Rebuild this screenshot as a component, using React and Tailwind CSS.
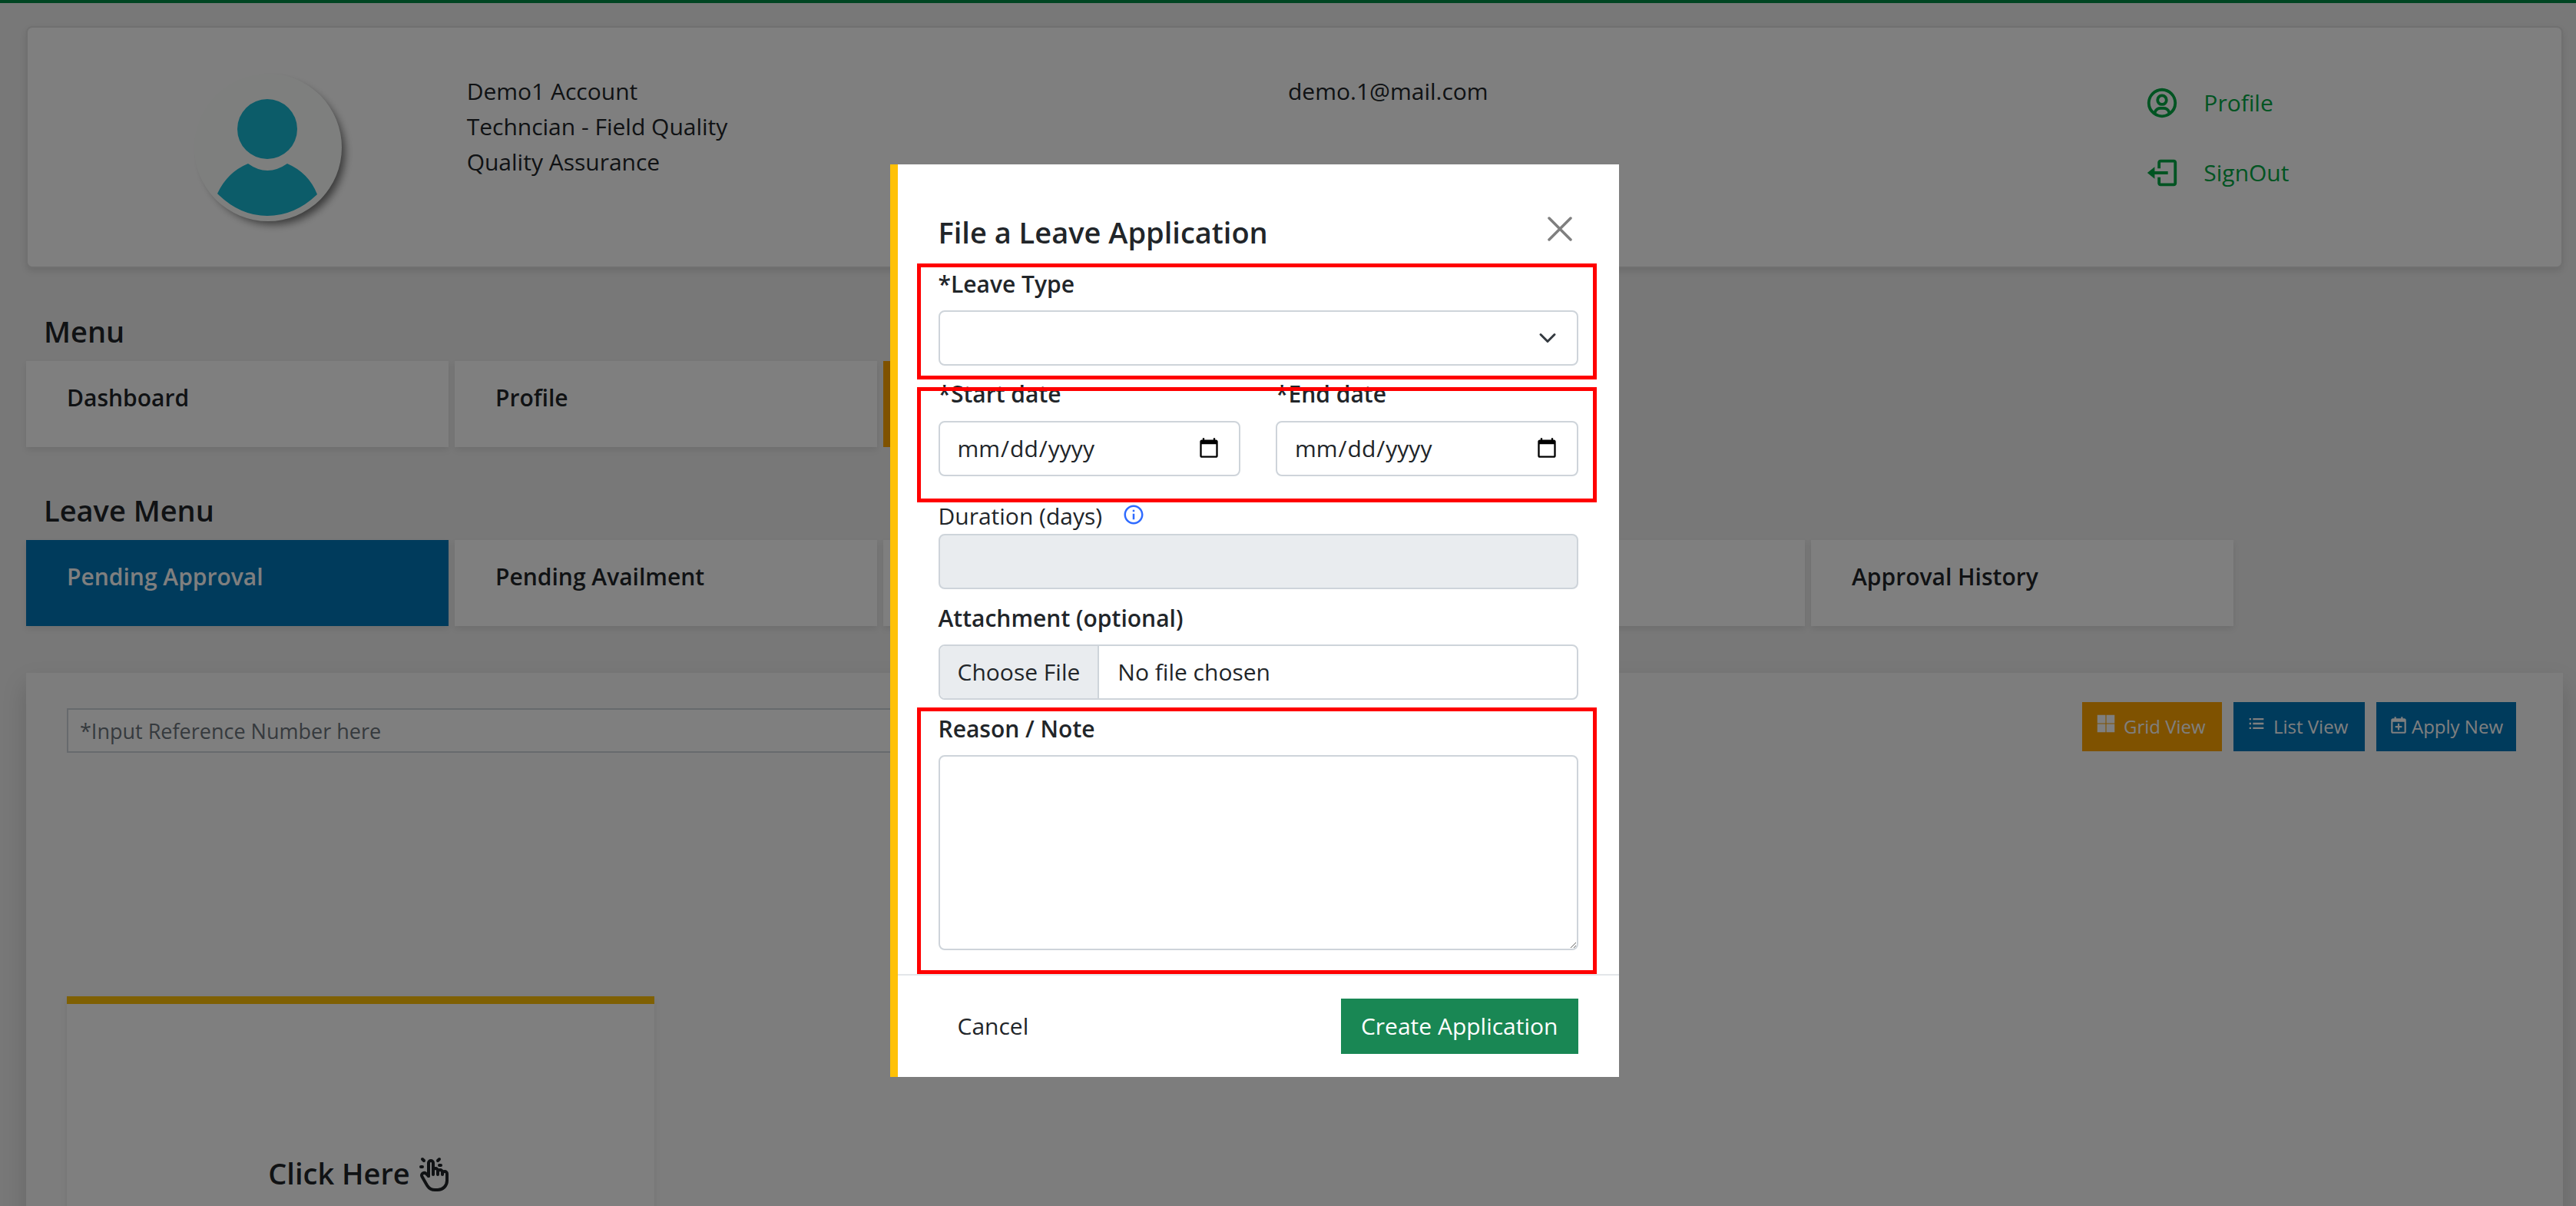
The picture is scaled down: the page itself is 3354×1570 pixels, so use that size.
import { BiCalendarPlus, BiInfoCircle, BiListUl, BiLogOut, BiLogoMicrosoft, BiUserCircle } from "react-icons/bi";
import { TbHandClick } from "react-icons/tb";

function Avatar() {
  return (
    <div className="size-48 overflow-hidden rounded-full bg-[#fdfffd] shadow-[7px_7px_11px_-3px_rgba(0,0,0,0.55)]">
      <svg viewBox="0 0 192 192" className="size-full" fill="#18b8d2" aria-hidden="true">
        <circle cx="95" cy="72" r="39" />
        <path d="M70 117Q95 135 121 117Q149 129 160 157Q131 185 95 185Q59 185 30 156Q43 128 70 117Z" />
      </svg>
    </div>
  );
}

function MenuCard({ label, tone = "bg-white text-[#212529]" }) {
  return (
    <button
      type="button"
      className={`flex h-28 w-[550px] items-start px-[53px] py-[25px] text-left leading-[46px] font-semibold shadow-[0_4px_8px_rgba(0,0,0,0.08)] ${tone}`}
    >
      {label}
    </button>
  );
}

function ToolButton({ icon, label, tone }) {
  return (
    <button type="button" className={`flex h-16 items-center text-2xl text-white ${tone}`}>
      {icon}
      {label}
    </button>
  );
}

function Highlight({ className }) {
  return <div className={`pointer-events-none absolute -right-6 -left-7 border-5 border-[#ff0000] ${className}`} />;
}

const field = "block w-full rounded-lg border-2 border-[#ced4da] px-[22px]";

function LeaveDialog() {
  return (
    <div role="dialog" aria-modal="true" aria-labelledby="dialog-title" className="w-[949px] self-start border-l-10 border-[#ffc107] bg-white">
      <form onSubmit={(e) => e.preventDefault()}>
        <div className="px-[53px] pt-[60px] pb-[31px]">
          <header className="mb-4 flex items-start justify-between">
            <h2 id="dialog-title" className="text-[38px] leading-[57px] font-semibold">File a Leave Application</h2>
            <button type="button" aria-label="Close" className="mt-2 mr-2 text-[#7f7f7f]">
              <svg viewBox="0 0 32 32" className="size-8" fill="none" stroke="currentColor" strokeWidth="3.500" strokeLinecap="round" aria-hidden="true">
                <path d="M2 2 30 30M30 2 2 30" />
              </svg>
            </button>
          </header>

          <div className="relative mb-3.5">
            <label htmlFor="leave-type" className="mb-[11px] block font-semibold">*Leave Type</label>
            <div className="relative">
              <select id="leave-type" defaultValue="" className={`${field} h-18 appearance-none bg-white`}>
                <option value=""></option>
              </select>
              <svg viewBox="0 0 16 16" className="pointer-events-none absolute top-6 right-7 size-6" fill="none" stroke="#343a40" strokeWidth="2" strokeLinecap="round" strokeLinejoin="round" aria-hidden="true">
                <path d="m2 5 6 6 6-6" />
              </svg>
            </div>
            <Highlight className="-top-1 -bottom-[18px]" />
          </div>

          <div className="relative mb-[29px] grid grid-cols-2 gap-[46px]">
            <div>
              <label htmlFor="start-date" className="mb-3 block font-semibold">*Start date</label>
              <input id="start-date" type="date" className={`${field} h-18 bg-white`} />
            </div>
            <div>
              <label htmlFor="end-date" className="mb-3 block font-semibold">*End date</label>
              <input id="end-date" type="date" className={`${field} h-18 bg-white`} />
            </div>
            <Highlight className="top-3.5 -bottom-[34px]" />
          </div>

          <div className="mb-[15px]">
            <div className="flex items-center gap-[26px]">
              <label htmlFor="duration">Duration (days)</label>
              <BiInfoCircle className="-mt-1 size-[30px] text-[#2f6bff]" />
            </div>
            <input id="duration" type="text" readOnly className={`${field} h-18 bg-[#e9ecef]`} />
          </div>

          <div className="mb-[15px]">
            <label htmlFor="attachment" className="mb-[11px] block font-semibold">Attachment (optional)</label>
            <input
              id="attachment"
              type="file"
              className="block h-18 w-full rounded-lg border-2 border-[#ced4da] bg-white file:mr-6 file:h-[68px] file:border-0 file:border-r-2 file:border-solid file:border-[#ced4da] file:bg-[#e9ecef] file:px-[23px] file:font-normal"
            />
          </div>

          <div className="relative">
            <label htmlFor="reason" className="mb-[11px] block font-semibold">Reason / Note</label>
            <textarea id="reason" className={`${field} h-[254px] bg-white`} />
            <Highlight className="-top-[5px] -bottom-[31px]" />
          </div>
        </div>

        <footer className="flex items-center justify-between border-t-2 border-[#e3e6e9] px-[53px] py-[30px]">
          <button type="button" className="h-18 px-[25px]">Cancel</button>
          <button type="submit" className="h-18 bg-[#198754] px-[26px] text-white">Create Application</button>
        </footer>
      </form>
    </div>
  );
}

export default function App() {
  return (
    <div className="h-screen overflow-hidden bg-[#f0f0f0] font-['Open_Sans',sans-serif] text-[30px] leading-[46px] text-[#212529]">
      <div className="flex h-full flex-col border-t-4 border-[#008a45] px-[34px] pt-[30px] pr-[17px]">
        <section className="grid h-[315px] shrink-0 grid-cols-[572fr_1070fr_1116fr_543fr] rounded-lg border-2 border-[#e0e0e0] bg-white pt-[60px] shadow-[0_4px_8px_rgba(0,0,0,0.1)]">
          <div className="flex justify-center pl-[54px]">
            <Avatar />
          </div>
          <div>
            <p>Demo1 Account</p>
            <p>Techncian - Field Quality</p>
            <p>Quality Assurance</p>
          </div>
          <p>demo.1@mail.com</p>
          <nav className="flex flex-col gap-[45px] pt-[15px] text-[#00a844]">
            <a href="#profile" className="flex items-center gap-[31px]">
              <BiUserCircle className="size-[46px]" />
              Profile
            </a>
            <a href="#signout" className="flex items-center gap-[31px]">
              <BiLogOut className="size-[46px]" />
              SignOut
            </a>
          </nav>
        </section>

        <h2 className="mt-[59px] ml-[23px] text-[38px] font-semibold">Menu</h2>
        <nav className="mt-4 flex gap-2">
          <MenuCard label="Dashboard" />
          <MenuCard label="Profile" />
          <div className="h-28 w-[550px] bg-[#ffa500]" />
        </nav>

        <h2 className="mt-[59px] ml-[23px] text-[38px] font-semibold">Leave Menu</h2>
        <nav className="mt-4 flex gap-2">
          <MenuCard label="Pending Approval" tone="bg-[#0076b8] text-white" />
          <MenuCard label="Pending Availment" />
          <div className="h-28 w-[596px] bg-white shadow-[0_4px_8px_rgba(0,0,0,0.08)]" />
          <div className="h-28 w-[596px] bg-white shadow-[0_4px_8px_rgba(0,0,0,0.08)]" />
          <MenuCard label="Approval History" />
        </nav>

        <main className="mt-[61px] grow bg-[#fafafa] pt-[38px] pr-[61px] pl-[53px] shadow-[0_15px_30px_rgba(0,0,0,0.15)]">
          <div className="flex items-start justify-between">
            <input
              type="text"
              aria-label="Reference number"
              placeholder="*Input Reference Number here"
              className="mt-2 h-[58px] w-1/2 border-2 border-[#ced4da] bg-white px-[15px] text-[27px] placeholder:text-[#6c757d]"
            />
            <div className="grid grid-cols-[182px_171px_182px] gap-[15px]">
              <ToolButton tone="bg-[#ffa500] pl-4" label="Grid View" icon={<BiLogoMicrosoft className="-mt-2 mr-2 size-[30px]" />} />
              <ToolButton tone="bg-[#0076b8] pl-4" label="List View" icon={<BiListUl className="-mt-2 mr-2 size-7" />} />
              <ToolButton tone="bg-[#0076b8] pl-4" label="Apply New" icon={<BiCalendarPlus className="-mt-1 mr-1 size-[26px]" />} />
            </div>
          </div>

          <section className="mt-[317px] flex h-[600px] w-[765px] items-start justify-center border-t-10 border-[#ffc107] bg-white pt-[194px] shadow-[0_4px_8px_rgba(0,0,0,0.08)]">
            <button type="button" className="flex items-center gap-2 text-[38px] font-semibold">
              Click Here
              <TbHandClick className="mt-1 size-12" />
            </button>
          </section>
        </main>
      </div>

      <div className="fixed inset-0 flex justify-center bg-black/50 pt-[214px] pr-[88px]">
        <LeaveDialog />
      </div>
    </div>
  );
}
